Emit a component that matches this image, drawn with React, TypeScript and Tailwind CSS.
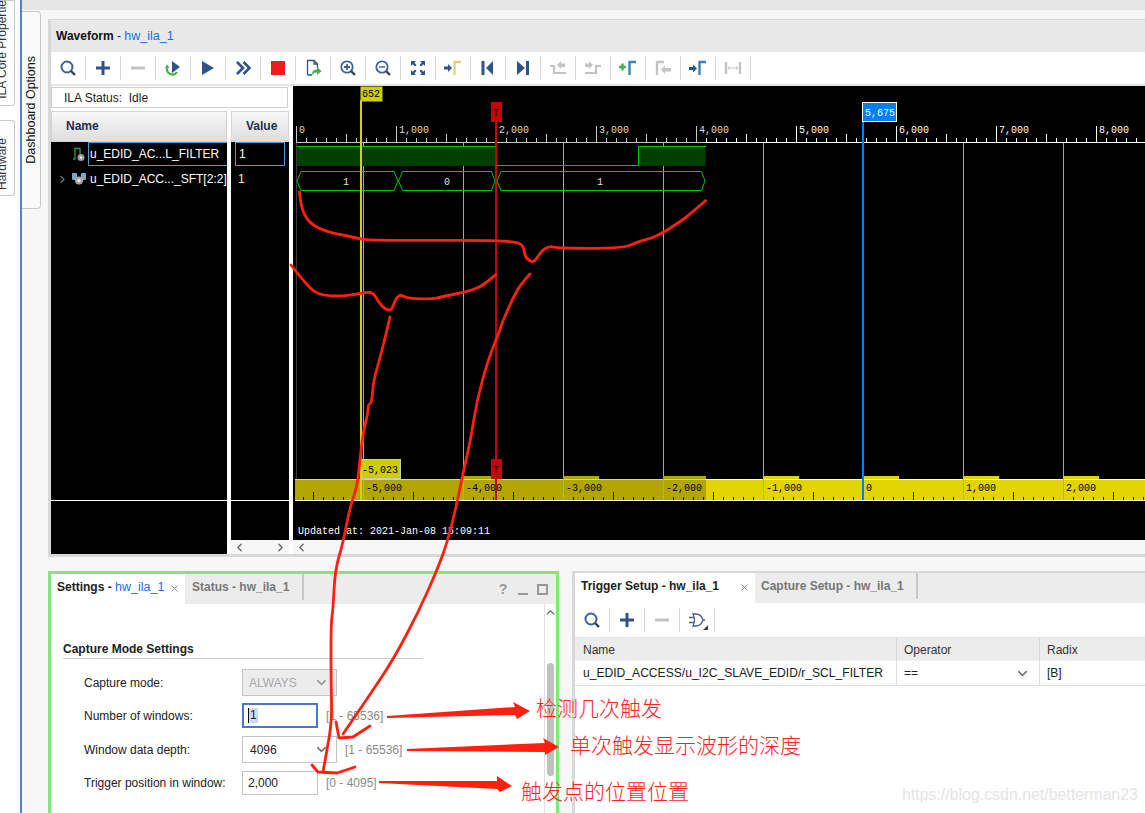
import { ChevronDown, ChevronLeft, ChevronRight, ChevronUp, X } from "lucide-react";
import type { ReactNode } from "react";

const NAVY = "#2f5288";
const GRAY = "#c4c4c4";

const Icon = ({ children }: { children: ReactNode }) => (
  <svg width="18" height="18" viewBox="0 0 18 18" fill="none" overflow="visible">
    {children}
  </svg>
);

const Search = () => (
  <Icon>
    <circle cx="8" cy="8" r="5.5" stroke="#3c6196" strokeWidth="2" />
    <path d="M12 12l4 4" stroke="#3a3f4a" strokeWidth="2.4" />
  </Icon>
);
const Plus = () => (
  <Icon>
    <path d="M9 2v14M2 9h14" stroke={NAVY} strokeWidth="3" />
  </Icon>
);
const Minus = () => (
  <Icon>
    <path d="M2 9h14" stroke={GRAY} strokeWidth="3" />
  </Icon>
);
const Rerun = () => (
  <Icon>
    <path d="M3 9a5.5 5.5 0 0 0 10 4" stroke="#43b04a" strokeWidth="2.2" />
    <path d="M1 9h4.5L3 5.500z" fill="#43b04a" />
    <path d="M8 2l8 6-8 6z" fill={NAVY} />
  </Icon>
);
const Play = () => (
  <Icon>
    <path d="M3 2l12 7-12 7z" fill={NAVY} />
  </Icon>
);
const Forward = () => (
  <Icon>
    <path d="M3 3l6 6-6 6M9.500 3l6 6-6 6" stroke={NAVY} strokeWidth="2.6" />
  </Icon>
);
const Stop = () => (
  <Icon>
    <rect x="2" y="2" width="14" height="14" fill="#ee1c1c" />
  </Icon>
);
const Export = () => (
  <Icon>
    <path d="M3.500 16V1.500H10L13.500 5v4M3.500 16H8M10 1.500V5h3.500" stroke={NAVY} strokeWidth="1.3" />
    <path d="M8 16c0-4 2-5.500 5-5.500V8l4.500 4-4.500 4v-2.500c-2 0-3.500.6-5 2.500z" fill="#43b04a" />
  </Icon>
);
const ZoomGlass = ({ plus }: { plus?: boolean }) => (
  <Icon>
    <circle cx="8" cy="8" r="5.7" stroke="#3c6196" strokeWidth="1.8" />
    <path d="M12 12l4 4" stroke="#3a3f4a" strokeWidth="2.4" />
    <path d={plus ? "M5 8h6M8 5v6" : "M5 8h6"} stroke={plus ? "#3c6196" : "#5a7fb5"} strokeWidth="1.8" />
  </Icon>
);
const Fit = () => (
  <Icon>
    <path d="M2 2h5L5.300 3.700 7.600 6 6 7.600 3.700 5.300 2 7zM16 2v5l-1.700-1.700L12 7.600 10.400 6l2.300-2.300L11 2zM2 16v-5l1.700 1.700L6 10.400 7.600 12l-2.300 2.300L7 16zM16 16h-5l1.700-1.700-2.300-2.300 1.600-1.600 2.300 2.300L16 11z" fill={NAVY} />
  </Icon>
);
const ToCursor = ({ color }: { color: string }) => (
  <Icon>
    <path d="M0 7.500h4V5l4 4-4 4v-2.500H0z" fill={NAVY} />
    <path d="M10.500 16V3H17" stroke={color} strokeWidth="2.4" />
  </Icon>
);
const First = () => (
  <Icon>
    <rect x="2.500" y="2" width="3" height="14" fill={NAVY} />
    <path d="M14 2v14L7 9z" fill={NAVY} />
  </Icon>
);
const Last = () => (
  <Icon>
    <path d="M3 2v14l8-7z" fill={NAVY} />
    <rect x="12" y="2" width="3" height="14" fill={NAVY} />
  </Icon>
);
const EdgeBack = () => (
  <Icon>
    <path d="M1 7h4v7h12" stroke={GRAY} strokeWidth="2.2" />
    <path d="M8 6l4-4v2.500h4v3.500h-4V10z" fill={GRAY} />
  </Icon>
);
const EdgeForward = () => (
  <Icon>
    <path d="M1 14h11V7h5" stroke={GRAY} strokeWidth="2.2" />
    <path d="M1 4.500h4V2l4 4-4 4V8H1z" fill={GRAY} />
  </Icon>
);
const AddMarker = () => (
  <Icon>
    <path d="M0 8h7M3.500 4.500v7" stroke="#43b04a" strokeWidth="2.4" />
    <path d="M10.500 16V3H17" stroke="#3c84b8" strokeWidth="2.4" />
  </Icon>
);
const MarkerBack = () => (
  <Icon>
    <path d="M3 16V3h7" stroke={GRAY} strokeWidth="2.4" />
    <path d="M7 10.500l4-4V9h6v3.500h-6V15z" fill={GRAY} />
  </Icon>
);
const MarkerForward = () => (
  <Icon>
    <path d="M0 8h4V5.500l4 4-4 4V11H0z" fill={NAVY} />
    <path d="M10.500 16V3H17" stroke="#3c84b8" strokeWidth="2.4" />
  </Icon>
);
const Span = () => (
  <Icon>
    <path d="M2 3v12M16 3v12" stroke={GRAY} strokeWidth="2.4" />
    <path d="M4 9h10M6 7l-2 2 2 2M12 7l2 2-2 2" stroke={GRAY} strokeWidth="1" />
  </Icon>
);
const GateIcon = () => (
  <Icon>
    <path d="M5 3h3c4 0 6 3 7 6-1 3-3 6-7 6H5c2-4 2-8 0-12zM1 6.500h5M1 11.500h5M15 9h2" stroke="#44628f" strokeWidth="1.3" />
    <path d="M20 14v5h-5z" fill="#444" />
  </Icon>
);

const toolbar = [
  <Search />, <Plus />, <Minus />, <Rerun />, <Play />, <Forward />, <Stop />, <Export />,
  <ZoomGlass plus />, <ZoomGlass />, <Fit />, <ToCursor color="#e4cf7e" />, <First />, <Last />,
  <EdgeBack />, <EdgeForward />, <AddMarker />, <MarkerBack />, <MarkerForward />, <Span />,
];

const ToolCell = ({ children }: { children: ReactNode }) => (
  <div className="w-[35px] h-[24px] flex items-center justify-center border-r border-[#d4d4d4]">{children}</div>
);

const range = (n: number) => Array.from({ length: n }, (_, i) => i);

const Mono = ({ x, y, fill, children }: { x: number; y: number; fill: string; children: string }) => (
  <text x={x} y={y} fill={fill} fontFamily="'Liberation Mono', monospace" fontSize="10">
    {children}
  </text>
);

// page coordinates, viewBox starts where the canvas starts
const WaveCanvas = () => {
  const gridLines = [363, 463, 563, 663, 763, 963, 1063];
  const topLabels = ["0", "1,000", "2,000", "3,000", "4,000", "5,000", "6,000", "7,000", "8,000"];
  const bottomLabels = ["-5,000", "-4,000", "-3,000", "-2,000", "-1,000", "0", "1,000", "2,000"];
  return (
    <svg width="852" height="454" viewBox="293 86 852 454" className="block bg-black">
      {/* top ruler */}
      <path d="M296 142.500H1145" stroke="#c8c8c8" />
      <path d="M706 142.500H1145" stroke="#fff" />
      {range(86).map((i) => {
        const x = 296.5 + i * 10;
        const h = i % 10 === 0 ? 16 : i % 5 === 0 ? 8 : 4;
        return <path key={i} d={`M${x} 142V${142 - h}`} stroke={x < 706 ? "#c8c8c8" : "#fff"} />;
      })}
      {topLabels.map((t, i) => (
        <Mono key={t} x={299 + i * 100} y={133} fill={i < 5 ? "#dcdcdc" : "#fff"}>
          {t}
        </Mono>
      ))}

      {/* grid */}
      <path d="M296.500 143V479" stroke="#3a3a3a" />
      {gridLines.map((x) => (
        <path key={x} d={`M${x + 0.5} 143V479`} stroke="#a8a8a8" />
      ))}

      {/* r_SCL_FILTER */}
      <rect x="297" y="146" width="199" height="20" fill="#003f00" />
      <rect x="638" y="146" width="67.500" height="20" fill="#003f00" />
      <path d="M297 146.500H496V165.500H638.500V146.500H706" stroke="#00c800" fill="none" />

      {/* SFT bus */}
      <path d="M297 181L301 171.500H394L398 181L394 190.500H301ZM398.500 181L402.500 171.500H491.500L495 181L491.500 190.500H402.500ZM497 181L501 171.500H701.500L705 181L701.500 190.500H501Z" stroke="#00c800" fill="none" />
      <Mono x={343} y={185} fill="#e0e0e0">1</Mono>
      <Mono x={444} y={185} fill="#e0e0e0">0</Mono>
      <Mono x={597} y={185} fill="#e0e0e0">1</Mono>

      {/* bottom ruler */}
      <rect x="295" y="479" width="850" height="22" fill="#e3d300" />
      <rect x="295" y="479" width="411" height="22" fill="#b3a500" />
      <path d="M295 479.500H706" stroke="#cfcfcf" />
      <path d="M706 479.500H1145" stroke="#fffbe0" />
      <path d="M295 500.500H1145" stroke="#fff" />
      {range(8).map((i) => {
        const x = 363 + i * 100;
        return (
          <rect key={i} x={x} y="476" width={i === 3 ? 43 : 36} height="3" fill={x < 706 ? "#b3a500" : "#e3d300"} />
        );
      })}
      {range(86).map((i) => {
        const x = 303.5 + i * 10;
        const h = (i - 6) % 10 === 0 ? 20 : (i - 1) % 10 === 0 ? 8 : 3;
        return <path key={i} d={`M${x} 500V${500 - h}`} stroke="#000" />;
      })}
      {gridLines.map((x) => (
        <path key={x} d={`M${x + 0.5} 479V500`} stroke="#a8a8a8" />
      ))}
      {bottomLabels.map((t, i) => (
        <Mono key={t} x={366 + i * 100} y={491} fill="#000">
          {t}
        </Mono>
      ))}

      <Mono x={298} y={534} fill="#fff">Updated at: 2021-Jan-08 15:09:11</Mono>

      {/* cursors */}
      <rect x="360" y="100" width="2" height="400" fill="#d4d400" />
      <rect x="360.500" y="86.500" width="22" height="15" fill="#cfcc00" />
      <Mono x={362} y={97} fill="#000">652</Mono>
      <rect x="361.500" y="459.500" width="39" height="19" fill="#cfcc00" stroke="#c8c8c8" />
      <Mono x={362} y={473} fill="#000">-5,023</Mono>

      <rect x="495" y="120" width="2" height="380" fill="#cc0000" />
      <rect x="491" y="102" width="11" height="20" fill="#cc0000" />
      <rect x="491" y="459" width="11" height="20" fill="#cc0000" />
      <Mono x={493} y={116} fill="#000">T</Mono>
      <Mono x={493} y={473} fill="#000">T</Mono>

      <rect x="862" y="120" width="2" height="380" fill="#0080f0" />
      <rect x="862.500" y="102.500" width="34" height="19" fill="#0080f0" stroke="#fff" />
      <Mono x={865} y={116} fill="#fff">5,675</Mono>
    </svg>
  );
};

// hand drawn look: quadratic curves through the midpoints
const smooth = (pts: number[][]) => {
  let d = `M${pts[0][0]} ${pts[0][1]}`;
  for (let i = 1; i < pts.length - 1; i++) {
    const mx = (pts[i][0] + pts[i + 1][0]) / 2;
    const my = (pts[i][1] + pts[i + 1][1]) / 2;
    d += `Q${pts[i][0]} ${pts[i][1]} ${mx} ${my}`;
  }
  const last = pts[pts.length - 1];
  return `${d}L${last[0]} ${last[1]}`;
};

const curveA = [[43,35],[47,70],[58,105],[75,128],[100,145],[145,160],[175,165],[215,174],[250,181],[400,181],[630,181],[690,186],[715,195],[720,228],[730,240],[747,248],[770,212],[795,198],[820,205],[1015,205],[1060,185],[1100,175],[1140,155],[1200,115],[1235,85],[1262,62]];
const curveB = [[18,255],[45,290],[85,335],[115,346],[160,349],[215,343],[262,333],[280,365],[300,388],[320,392],[330,360],[345,343],[370,356],[445,357],[470,350],[540,337],[590,320],[632,284]];
const lineLeft = [[390,317],[387,330],[382,350],[378,365],[373,383],[372,402],[368,405],[368,413],[363,433],[360,460],[357,487],[350,507],[343,543],[335,570],[333,610],[331,623],[331,680],[332,720],[327,750],[323,772]];
const lineRight = [[530,274],[520,285],[512,300],[502,323],[500,330],[488,360],[477,400],[470,443],[463,473],[457,503],[448,540],[438,568],[418,613],[393,660],[371,693],[343,734]];

const Annotations = () => (
  <svg width="1145" height="813" viewBox="0 0 1145 813" fill="none" className="absolute inset-0 pointer-events-none">
    <g stroke="#ff2010" strokeLinecap="round" strokeLinejoin="round">
      <g transform="translate(285 180) scale(0.3333)" strokeWidth="8.500">
        <path d={smooth(curveA)} />
        <path d={smooth(curveB)} />
      </g>
      <g strokeWidth="2.800">
        <path d={smooth(lineLeft)} />
        <polyline points="312,765 318,772 337,773 355,767" />
        <path d={smooth(lineRight)} />
        <polyline points="336,722 339,738 353,737 370,726" />
      </g>
    </g>
    <g fill="#ff2010">
      <polygon points="387,716 515,707 513,702 530,711 517,719 515,715 387,718" />
      <polygon points="407,749 545,743 543,738 559,747 545,755 545,752 407,751" />
      <polygon points="379,781 497,781 497,776 512,786 500,792 497,789 379,783" />
    </g>
  </svg>
);

const Note = ({ className, children }: { className: string; children: string }) => (
  <div className={`absolute text-[21px] leading-[24px] font-light text-[#ff2222] whitespace-nowrap font-['Noto_Sans_CJK_SC',sans-serif] ${className}`}>
    {children}
  </div>
);

const Field = ({ label, mt, children }: { label: string; mt: string; children: ReactNode }) => (
  <div className={`flex items-center ${mt}`}>
    <div className="w-[158px] text-[#222]">{label}</div>
    {children}
  </div>
);

const Hint = ({ className, children }: { className: string; children: string }) => (
  <div className={`text-[#8a8a8a] ${className}`}>{children}</div>
);

const SettingsPanel = () => (
  <div className="w-[511px] h-[300px] shrink-0 border-[3px] border-b-0 border-[#7ee878] bg-white flex flex-col">
    <div className="h-[30px] bg-[#ececec] flex items-start">
      <div className="w-[134px] h-[30px] bg-white flex items-center pl-[6px] pb-[4px] gap-[5px] whitespace-nowrap">
        <span className="font-bold text-[#222]">
          Settings - <span className="font-normal text-[12.500px] text-[#1a6cf0]">hw_ila_1</span>
        </span>
        <X size={11} color="#888" strokeWidth={2} className="mt-[3px]" />
      </div>
      <div className="w-[119px] h-[26px] flex items-center pl-[7px] font-bold text-[#777] border-r-2 border-[#c8c8c8] whitespace-nowrap">
        Status - hw_ila_1
      </div>
      <div className="flex-1 flex items-center justify-end gap-[9px] pr-[8px] h-[30px] text-[#999]">
        <span className="font-bold text-[14px] w-[12px] text-center">?</span>
        <div className="w-[10px] h-[8px] border-b-2 border-[#999] mt-[3px]" />
        <div className="w-[11px] h-[11px] border-2 border-[#999]" />
      </div>
    </div>
    <div className="flex flex-1">
      <div className="flex-1 pl-[12px] pt-[37px]">
        <div className="w-[360px] h-[18px] border-b border-[#ccc] font-bold text-[#222] leading-[16px]">
          Capture Mode Settings
        </div>
        <div className="pl-[21px] pt-[10px]">
          <Field label="Capture mode:" mt="mt-0">
            <div className="w-[95px] h-[27px] border border-[#c4c4c4] bg-[#ececec] flex items-center justify-between pl-[6px] pr-[7px] text-[#a8a8a8]">
              ALWAYS
              <ChevronDown size={15} color="#999" strokeWidth={2.5} />
            </div>
          </Field>
          <Field label="Number of windows:" mt="mt-[7px]">
            <div className="w-[76px] h-[25px] border-2 border-[#4a78c8] flex items-center pl-[4px] bg-white">
              <span className="bg-[#c8dcfa] border-l border-black px-[1px] leading-[15px] text-[#222]">1</span>
            </div>
            <Hint className="ml-[8px]">[1 - 65536]</Hint>
          </Field>
          <Field label="Window data depth:" mt="mt-[8px]">
            <div className="w-[95px] h-[27px] border border-[#c4c4c4] flex items-center justify-between pl-[7px] pr-[7px] text-[#222]">
              4096
              <ChevronDown size={15} color="#777" strokeWidth={2.5} />
            </div>
            <Hint className="ml-[8px]">[1 - 65536]</Hint>
          </Field>
          <Field label="Trigger position in window:" mt="mt-[8px]">
            <div className="w-[76px] h-[24px] border border-[#c4c4c4] flex items-center pl-[5px] text-[#222]">2,000</div>
            <Hint className="ml-[8px]">[0 - 4095]</Hint>
          </Field>
        </div>
      </div>
      <div className="w-[12px] border-l border-[#e0e0e0] flex flex-col items-center">
        <ChevronUp size={13} color="#666" strokeWidth={2.5} className="mt-[2px]" />
        <div className="w-[7px] h-[113px] mt-[44px] bg-[#c0c0c0] rounded-[4px]" />
      </div>
    </div>
  </div>
);

const TriggerPanel = () => (
  <div className="w-[600px] h-[300px] shrink-0 border-l-[3px] border-t-2 border-[#d8d8d8] bg-white flex flex-col">
    <div className="h-[30px] bg-[#ececec] flex items-start">
      <div className="w-[180px] h-[30px] bg-white flex items-center justify-between pl-[6px] pr-[5px] pb-[4px] whitespace-nowrap font-bold text-[#222]">
        Trigger Setup - hw_ila_1
        <X size={11} color="#888" strokeWidth={2} className="mt-[3px]" />
      </div>
      <div className="w-[163px] h-[26px] flex items-center pl-[6px] font-bold text-[#777] border-r-2 border-[#c8c8c8] whitespace-nowrap">
        Capture Setup - hw_ila_1
      </div>
    </div>
    <div className="h-[34px] flex items-center">
      <ToolCell><Search /></ToolCell>
      <ToolCell><Plus /></ToolCell>
      <ToolCell><Minus /></ToolCell>
      <ToolCell><GateIcon /></ToolCell>
    </div>
    <div className="flex h-[24px] bg-[#ececec] items-center text-[#333] border-t border-[#e4e4e4]">
      <div className="w-[321px] pl-[8px]">Name</div>
      <div className="w-[143px] pl-[7px] h-full flex items-center border-l border-[#d8d8d8]">Operator</div>
      <div className="flex-1 pl-[7px] h-full flex items-center border-l border-[#d8d8d8]">Radix</div>
    </div>
    <div className="flex h-[25px] items-center text-[#222] border-b border-[#e0e0e0]">
      <div className="w-[321px] pl-[8px] text-[12.100px] whitespace-nowrap">u_EDID_ACCESS/u_I2C_SLAVE_EDID/r_SCL_FILTER</div>
      <div className="w-[143px] pl-[7px] pr-[9px] h-full flex items-center justify-between border-l border-[#e0e0e0]">
        ==
        <ChevronDown size={15} color="#777" strokeWidth={2.5} />
      </div>
      <div className="flex-1 pl-[7px] h-full flex items-center border-l border-[#e0e0e0]">[B]</div>
    </div>
  </div>
);

const SignalIcon = () => (
  <svg width="16" height="16" viewBox="0 0 16 16" fill="none">
    <path d="M2 13h2V2.500h5V10" stroke="#2f9a45" strokeWidth="1.3" />
    <circle cx="10" cy="11.500" r="3.500" fill="#9a9a9a" />
    <circle cx="10" cy="11.500" r="1.300" fill="#eee" />
  </svg>
);

const BusIcon = () => (
  <svg width="16" height="16" viewBox="0 0 16 16" fill="none">
    <rect x="1" y="2" width="5" height="7" rx="1" fill="#7fa8c8" />
    <rect x="10" y="2" width="5" height="7" rx="1" fill="#7fa8c8" />
    <circle cx="8" cy="9.500" r="4" fill="#a8a8a8" />
    <circle cx="8" cy="9.500" r="1.500" fill="#eee" />
  </svg>
);

export default function App() {
  return (
    <div className="relative w-[1145px] h-[813px] overflow-hidden flex bg-[#f7f7f7] text-[12px] font-['Liberation_Sans',Arial,sans-serif]">
      {/* far left tabs, mostly cut off by the window edge */}
      <div className="w-[19.500px] bg-white shrink-0 flex flex-col overflow-hidden">
        <div className="w-[15px] h-[106px] shrink-0 border border-l-0 border-[#c8c8c8] rounded-br-[3px] flex items-end justify-end overflow-hidden">
          <span className="[writing-mode:vertical-rl] rotate-180 whitespace-nowrap leading-[12px] text-[#333] mr-[6px] mb-[6px]">ILA Core Properties</span>
        </div>
        <div className="w-[15px] h-[76px] mt-[14px] shrink-0 border border-l-0 border-[#c8c8c8] rounded-r-[3px] flex items-end justify-end overflow-hidden">
          <span className="[writing-mode:vertical-rl] rotate-180 whitespace-nowrap leading-[12px] text-[#333] mr-[6px] mb-[5px]">Hardware</span>
        </div>
      </div>
      <div className="w-[2.500px] bg-[#4f81d1] shrink-0" />

      <div className="flex-1 flex flex-col min-w-0">
        <div className="h-[10px] bg-[#e6e6e6] shrink-0" />
        <div className="flex flex-1 min-h-0">
          <div className="w-[19px] h-[198px] mt-[1px] shrink-0 border border-l-0 border-[#c8c8c8] rounded-r-[4px] bg-[#f9f9f9] flex items-center justify-center">
            <span className="[writing-mode:vertical-rl] rotate-180 whitespace-nowrap text-[12.500px] text-[#111]">Dashboard Options</span>
          </div>

          <div className="pl-[7px] pt-[9px] flex flex-col w-[1104px] shrink-0">
            {/* Waveform window */}
            <div className="w-[1097px] h-[538px] shrink-0 border-l-[3px] border-t border-b-[3px] border-[#d8d8d8] flex flex-col">
              <div className="h-[32px] shrink-0 bg-[#e8e8e8] flex items-center pl-[5px] font-bold text-[#111]">
                Waveform&nbsp;<span className="font-normal text-[#222]">-&nbsp;</span>
                <span className="font-normal text-[12.500px] text-[#1a6cf0]">hw_ila_1</span>
              </div>
              <div className="h-[34px] shrink-0 bg-white flex items-center border-b-2 border-[#e4e4e4]">
                {toolbar.map((icon, i) => (
                  <ToolCell key={i}>{icon}</ToolCell>
                ))}
              </div>
              <div className="flex flex-1 min-h-0 bg-white">
                <div className="w-[242px] shrink-0 flex flex-col">
                  <div className="w-[237px] h-[21px] mt-px border border-[#cfcfcf] bg-white flex items-center pl-[12px] text-[#222] whitespace-pre">
                    ILA Status:  Idle
                  </div>
                  <div className="flex gap-[4px] mt-[3px] flex-1 min-h-0">
                    <div className="w-[176px] flex flex-col">
                      <div className="h-[31px] shrink-0 bg-linear-to-b from-[#f8f8f8] to-[#dedede] border border-[#d4d4d4] flex items-center pl-[14px] pb-[1px] font-bold text-[#1d2f4a]">
                        Name
                      </div>
                      <div className="flex-1 bg-black text-white flex flex-col">
                        <div className="h-[24px] flex items-center">
                          <div className="w-[37px] flex justify-end pr-[1px]">
                            <SignalIcon />
                          </div>
                          <div className="flex-1 h-full border border-r-0 border-[#4a9ad8] flex items-center pl-[1px] whitespace-nowrap">
                            u_EDID_AC...L_FILTER
                          </div>
                        </div>
                        <div className="h-[24px] flex items-center mt-px">
                          <div className="w-[37px] flex items-center justify-end pr-[1px]">
                            <ChevronRight size={13} color="#777" strokeWidth={2} className="mr-[2px]" />
                            <BusIcon />
                          </div>
                          <div className="pl-[2px] whitespace-nowrap">u_EDID_ACC..._SFT[2:2]</div>
                        </div>
                        <div className="h-[309px]" />
                        <div className="h-px bg-white" />
                      </div>
                    </div>
                    <div className="w-[58px] flex flex-col">
                      <div className="h-[31px] shrink-0 bg-linear-to-b from-[#f8f8f8] to-[#dedede] border border-[#d4d4d4] flex items-center pl-[14px] pb-[1px] font-bold text-[#1d2f4a]">
                        Value
                      </div>
                      <div className="h-[398px] shrink-0 bg-black text-white flex flex-col">
                        <div className="h-[24px] mx-[4px] border border-[#4a9ad8] flex items-center pl-[3px]">1</div>
                        <div className="h-[24px] mt-px pl-[7px] flex items-center text-[#f0f0c0]">1</div>
                        <div className="h-[309px]" />
                        <div className="h-px bg-white" />
                      </div>
                      <div className="h-[14px] bg-[#f7f7f7] flex items-center justify-between px-[2px]">
                        <ChevronLeft size={13} color="#666" strokeWidth={2.5} />
                        <ChevronRight size={13} color="#666" strokeWidth={2.5} />
                      </div>
                    </div>
                  </div>
                </div>
                <div className="flex-1 min-w-0 flex flex-col">
                  <WaveCanvas />
                  <div className="h-[14px] bg-[#f7f7f7] flex items-center pl-[2px]">
                    <ChevronLeft size={13} color="#666" strokeWidth={2.5} />
                  </div>
                </div>
              </div>
            </div>

            {/* lower windows */}
            <div className="flex gap-[13px] mt-[14px]">
              <SettingsPanel />
              <TriggerPanel />
            </div>
          </div>
        </div>
      </div>

      <Annotations />
      <Note className="left-[536px] top-[695px]">检测几次触发</Note>
      <Note className="left-[570px] top-[732px]">单次触发显示波形的深度</Note>
      <Note className="left-[521px] top-[778px]">触发点的位置位置</Note>
      <div className="absolute left-[902px] top-[784px] text-[15.900px] leading-[22px] text-[#e4e4e4] whitespace-nowrap">
        https://blog.csdn.net/betterman23
      </div>
    </div>
  );
}
